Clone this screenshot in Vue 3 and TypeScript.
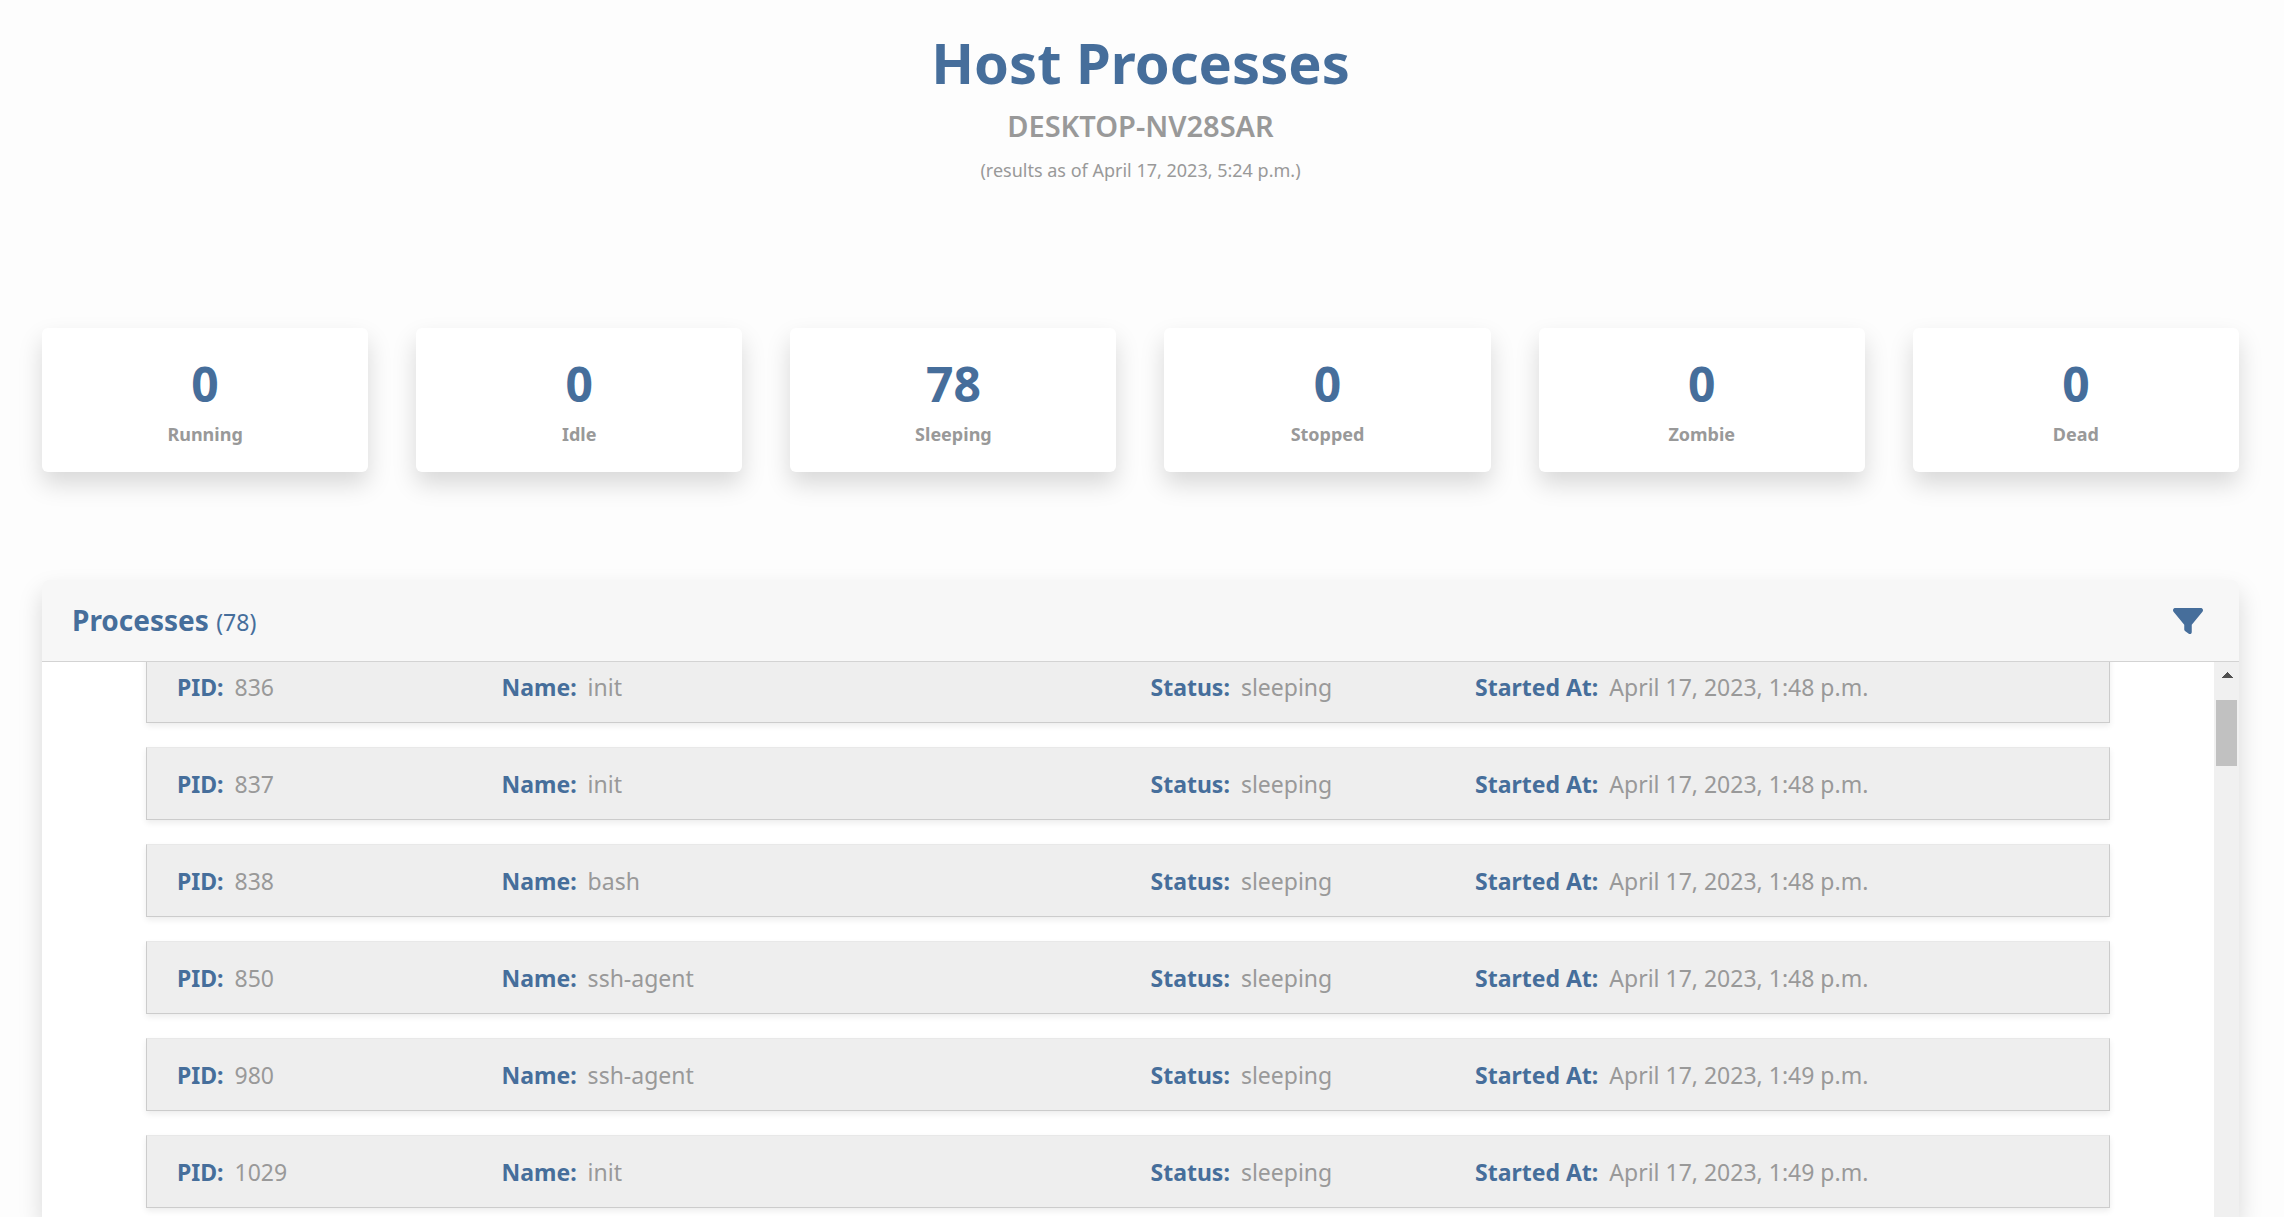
<script setup lang="ts">
import { onMounted, ref } from 'vue'

interface Stat {
  label: string
  count: number
}

interface Process {
  pid: number
  name: string
  status: string
  startedAt: string
}

const stats: Stat[] = [
  { label: 'Running', count: 0 },
  { label: 'Idle', count: 0 },
  { label: 'Sleeping', count: 78 },
  { label: 'Stopped', count: 0 },
  { label: 'Zombie', count: 0 },
  { label: 'Dead', count: 0 },
]

const processes: Process[] = [
  { pid: 836, name: 'init', status: 'sleeping', startedAt: 'April 17, 2023, 1:48 p.m.' },
  { pid: 837, name: 'init', status: 'sleeping', startedAt: 'April 17, 2023, 1:48 p.m.' },
  { pid: 838, name: 'bash', status: 'sleeping', startedAt: 'April 17, 2023, 1:48 p.m.' },
  { pid: 850, name: 'ssh-agent', status: 'sleeping', startedAt: 'April 17, 2023, 1:48 p.m.' },
  { pid: 980, name: 'ssh-agent', status: 'sleeping', startedAt: 'April 17, 2023, 1:49 p.m.' },
  { pid: 1029, name: 'init', status: 'sleeping', startedAt: 'April 17, 2023, 1:49 p.m.' },
]

const list = ref<HTMLElement | null>(null)

onMounted(() => {
  if (list.value) list.value.scrollTop = 12
})
</script>

<template>
  <main class="page">
    <header class="heading">
      <h1>Host Processes</h1>
      <h2>DESKTOP-NV28SAR</h2>
      <p>(results as of April 17, 2023, 5:24 p.m.)</p>
    </header>

    <section class="stats" aria-label="Process counts">
      <div v-for="stat in stats" :key="stat.label" class="stat">
        <div class="count">{{ stat.count }}</div>
        <div class="label">{{ stat.label }}</div>
      </div>
    </section>

    <section class="panel">
      <div class="panel-header">
        <h3>Processes <small>(78)</small></h3>
        <button type="button" class="filter" aria-label="Filter">
          <svg viewBox="0 0 512 512" aria-hidden="true">
            <path
              fill="currentColor"
              d="M3.9 54.9C10.5 40.9 24.5 32 40 32H472c15.5 0 29.5 8.9 36.1 22.9s4.6 30.5-5.2 42.5L320 320.9V448c0 12.1-6.8 23.2-17.7 28.6s-23.8 4.3-33.5-3l-64-48c-8.1-6-12.8-15.5-12.8-25.6V320.9L9 97.3C-.7 85.4-2.8 68.8 3.9 54.9z"
            />
          </svg>
        </button>
      </div>
      <div class="panel-body">
        <ul ref="list" class="list">
          <li v-for="process in processes" :key="process.pid" class="row">
            <div class="cell"><strong>PID:</strong><span>{{ process.pid }}</span></div>
            <div class="cell"><strong>Name:</strong><span>{{ process.name }}</span></div>
            <div class="cell"><strong>Status:</strong><span>{{ process.status }}</span></div>
            <div class="cell"><strong>Started At:</strong><span>{{ process.startedAt }}</span></div>
          </li>
        </ul>
        <div class="scrollbar" aria-hidden="true">
          <svg class="arrow" viewBox="0 0 12 6" shape-rendering="crispEdges">
            <path fill="#505050" d="M6 0L12 6H0z" />
          </svg>
          <div class="thumb"></div>
        </div>
      </div>
    </section>
  </main>
</template>

<style>
body {
  margin: 0;
  background: #fdfdfd;
}
</style>

<style scoped>
.page {
  box-sizing: border-box;
  display: flex;
  flex-direction: column;
  height: 100vh;
  padding: 26px 45px 0 42px;
  overflow: hidden;
  font-family: "Noto Sans", "Open Sans", sans-serif;
  color: #999;
}

h1,
h2,
h3,
p,
ul {
  margin: 0;
  padding: 0;
}

.heading {
  text-align: center;
}

h1 {
  font-size: 56px;
  line-height: 72px;
  font-weight: 700;
  color: #466e9b;
}

h2 {
  margin-top: 10px;
  font-size: 29px;
  line-height: 36px;
  font-weight: 600;
}

p {
  margin-top: 12px;
  font-size: 18px;
  line-height: 28px;
}

.stats {
  display: grid;
  grid-template-columns: repeat(6, 1fr);
  gap: 48px;
  margin: 144px 0 108px;
}

.stat {
  padding: 28px 0 24px;
  border-radius: 6px;
  background: #fff;
  box-shadow: 0 12px 24px rgba(0, 0, 0, 0.15);
  text-align: center;
  font-weight: 700;
}

.count {
  font-size: 48px;
  line-height: 56px;
  color: #466e9b;
}

.label {
  margin-top: 8px;
  font-size: 18px;
  line-height: 28px;
}

.panel {
  display: flex;
  flex: 1;
  flex-direction: column;
  min-height: 0;
  border-radius: 6px 6px 0 0;
  background: #fff;
  box-shadow: 0 12px 24px rgba(0, 0, 0, 0.15);
}

.panel-header {
  display: flex;
  align-items: center;
  justify-content: space-between;
  height: 81px;
  padding: 0 36px 0 30px;
  border-bottom: 1px solid #d3d3d3;
  border-radius: 6px 6px 0 0;
  background: #f7f7f7;
  color: #466e9b;
}

h3 {
  font-size: 28px;
  line-height: 40px;
  font-weight: 700;
}

h3 small {
  font-size: 23px;
  font-weight: 400;
}

.filter {
  display: block;
  padding: 0;
  border: 0;
  background: none;
  color: inherit;
  cursor: pointer;
}

.filter svg {
  display: block;
  width: 30px;
  height: 30px;
}

.panel-body {
  display: flex;
  flex: 1;
  min-height: 0;
}

.list {
  display: flex;
  flex: 1;
  flex-direction: column;
  gap: 24px;
  padding: 0 104px 24px;
  overflow-y: auto;
  scrollbar-width: none;
  list-style: none;
}

.row {
  display: grid;
  flex: none;
  grid-template-columns: 2fr 4fr 2fr 4fr;
  padding: 20px 0 19px 15px;
  border: 1px solid #ccc;
  border-top-color: #e8e8e8;
  background: #eee;
  box-shadow: 0 3px 6px rgba(0, 0, 0, 0.075);
  font-size: 23px;
  line-height: 32px;
}

.cell {
  display: flex;
  gap: 11px;
  padding: 0 15px;
  white-space: nowrap;
}

strong {
  font-weight: 700;
  color: #466e9b;
}

.scrollbar {
  display: flex;
  flex-direction: column;
  align-items: center;
  width: 25px;
  background: #f0f0f0;
}

.arrow {
  width: 12px;
  height: 6px;
  margin: 10px 0 22px;
}

.thumb {
  width: 21px;
  height: 66px;
  background: #c1c1c1;
}
</style>
